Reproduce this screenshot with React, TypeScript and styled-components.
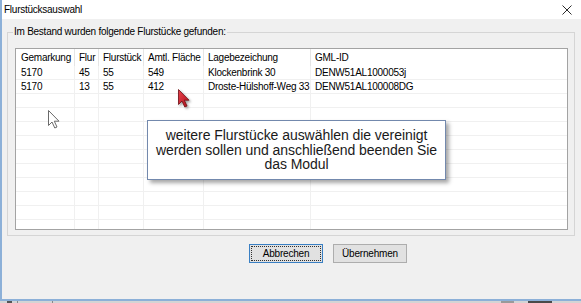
import React from 'react';
import styled, { createGlobalStyle } from 'styled-components';

const GlobalStyle = createGlobalStyle`
    html, body {
        margin: 0;
        padding: 0;
        background: #ffffff;
    }
    body {
        font-family: 'Liberation Sans', Arial, sans-serif;
        font-size: 10px;
        letter-spacing: -0.25px;
        color: #000000;
    }
`;

interface Parcel {
    gemarkung: string;
    flur: string;
    flurstueck: string;
    flaeche: string;
    lage: string;
    gmlId: string;
}

const parcels: Parcel[] = [
    { gemarkung: '5170', flur: '45', flurstueck: '55', flaeche: '549', lage: 'Klockenbrink 30', gmlId: 'DENW51AL1000053j' },
    { gemarkung: '5170', flur: '13', flurstueck: '55', flaeche: '412', lage: 'Droste-Hülshoff-Weg 33', gmlId: 'DENW51AL100008DG' },
];

const headers = ['Gemarkung', 'Flur', 'Flurstück', 'Amtl. Fläche', 'Lagebezeichung', 'GML-ID'];

const hintLines = ['weitere Flurstücke auswählen die vereinigt', 'werden sollen und anschließend beenden Sie', 'das Modul'];

const EMPTY_ROWS = 10;

const Screen = styled.div`
    position: relative;
    width: 581px;
    height: 303px;
    overflow: hidden;
    display: flex;
    flex-direction: column;
`;

const Window = styled.div`
    display: flex;
    flex-direction: column;
    width: 581px;
    box-sizing: border-box;
    border-left: 2px solid #8cb0d8;
    border-bottom: 2px solid #8cb0d8;
`;

const TitleBar = styled.div`
    height: 19px;
    display: flex;
    align-items: center;
    padding: 0 9px 0 2px;
    background: #ffffff;
`;

const Title = styled.span`
    font-size: 10px;
    line-height: 12px;
    color: #000000;
`;

const CloseIcon = styled.svg`
    margin-left: auto;
    display: block;
`;

const Body = styled.div`
    height: 280px;
    box-sizing: border-box;
    background: #f0f0f0;
    padding: 7px 0 0 5px;
    display: flex;
    flex-direction: column;
`;

const GroupBox = styled.fieldset`
    width: 568px;
    box-sizing: border-box;
    margin: 0;
    padding: 0 6px 5px 7px;
    border: 1px solid #d5d5d5;
    min-inline-size: 0;
`;

const Legend = styled.legend`
    margin-left: -2px;
    padding: 0 1px;
    font-size: 10px;
    line-height: 12px;
    color: #000000;
`;

const ListView = styled.div`
    margin-top: 10px;
    height: 182px;
    box-sizing: border-box;
    border: 1px solid #a3a3a3;
    background: #ffffff;
    overflow: hidden;
`;

const Row = styled.div<{ $header?: boolean }>`
    display: grid;
    grid-template-columns: 59px 24px 45px 60px 107px 1fr;
    height: ${({ $header }) => ($header ? '17px' : '14px')};
    box-sizing: border-box;
    border-bottom: ${({ $header }) => ($header ? 'none' : '1px solid #f0f0f0')};
`;

const Cell = styled.div<{ $header?: boolean }>`
    padding: 0 3px 0 4px;
    border-right: 1px solid ${({ $header }) => ($header ? '#e5e5e5' : '#f0f0f0')};
    font-size: 10px;
    line-height: ${({ $header }) => ($header ? '17px' : '13px')};
    white-space: nowrap;
    overflow: hidden;
    color: #000000;

    &:first-child {
        padding-left: 5px;
    }
    &:last-child {
        border-right: none;
    }
`;

const ButtonRow = styled.div`
    display: flex;
    gap: 10px;
    margin-top: 8px;
    padding-left: 242px;
`;

const Button = styled.button<{ $focused?: boolean }>`
    width: 74px;
    height: 19px;
    box-sizing: border-box;
    margin: 0;
    padding: 0;
    font-family: 'Liberation Sans', Arial, sans-serif;
    font-size: 10px;
    letter-spacing: -0.2px;
    color: #000000;
    background: #e1e1e1;
    border: 1px solid ${({ $focused }) => ($focused ? '#3a80c4' : '#adadad')};
    outline: ${({ $focused }) => ($focused ? '1px dotted #303030' : 'none')};
    outline-offset: -3px;
`;

const Taskbar = styled.div`
    height: 2px;
    display: flex;
    background: #d4d4d4;
`;

const TaskItem = styled.div<{ $left: number; $width: number; $color: string }>`
    margin-left: ${({ $left }) => $left}px;
    width: ${({ $width }) => $width}px;
    background: ${({ $color }) => $color};
`;

const Hint = styled.div`
    position: absolute;
    left: 147px;
    top: 120px;
    width: 299px;
    height: 60px;
    box-sizing: border-box;
    display: flex;
    flex-direction: column;
    align-items: center;
    justify-content: center;
    background: #ffffff;
    border: 1px solid #7389ad;
    box-shadow: 3px 3px 4px rgba(0, 0, 0, 0.35);
`;

const HintLine = styled.span`
    font-family: 'Liberation Sans', Arial, sans-serif;
    font-size: 14px;
    line-height: 14.5px;
    letter-spacing: -0.05px;
    white-space: nowrap;
    color: #1a1a1a;
`;

const Cursor = styled.svg<{ $x: number; $y: number }>`
    position: absolute;
    left: ${({ $x }) => $x}px;
    top: ${({ $y }) => $y}px;
    overflow: visible;
`;

const ARROW = 'M0.5 0.5 L0.5 15.5 L4 12 L6.8 18 L9 17 L6.3 11.2 L11 11.2 Z';

export default function App() {
    const blanks = new Array(EMPTY_ROWS).fill(0);

    return (
        <Screen>
            <GlobalStyle />
            <Window>
                <TitleBar>
                    <Title>Flurstücksauswahl</Title>
                    <CloseIcon width="10" height="10" viewBox="0 0 10 10">
                        <path d="M0.5 0.5 L9.5 9.5 M9.5 0.5 L0.5 9.5" stroke="#2b2b2b" strokeWidth="1" />
                    </CloseIcon>
                </TitleBar>
                <Body>
                    <GroupBox>
                        <Legend>Im Bestand wurden folgende Flurstücke gefunden:</Legend>
                        <ListView>
                            <Row $header>
                                {headers.map((h) => (
                                    <Cell $header key={h}>
                                        {h}
                                    </Cell>
                                ))}
                            </Row>
                            {parcels.map((p) => (
                                <Row key={p.gmlId}>
                                    <Cell>{p.gemarkung}</Cell>
                                    <Cell>{p.flur}</Cell>
                                    <Cell>{p.flurstueck}</Cell>
                                    <Cell>{p.flaeche}</Cell>
                                    <Cell>{p.lage}</Cell>
                                    <Cell>{p.gmlId}</Cell>
                                </Row>
                            ))}
                            {blanks.map((_, i) => (
                                <Row key={`blank-${i}`}>
                                    {headers.map((h) => (
                                        <Cell key={h} />
                                    ))}
                                </Row>
                            ))}
                        </ListView>
                    </GroupBox>
                    <ButtonRow>
                        <Button $focused>Abbrechen</Button>
                        <Button>Übernehmen</Button>
                    </ButtonRow>
                </Body>
            </Window>
            <Taskbar>
                <TaskItem $left={7} $width={5} $color="#555555" />
                <TaskItem $left={5} $width={1} $color="#888888" />
                <TaskItem $left={34} $width={1} $color="#888888" />
                <TaskItem $left={448} $width={13} $color="#9a9a9a" />
                <TaskItem $left={14} $width={24} $color="#4a4a4a" />
            </Taskbar>

            <Hint>
                {hintLines.map((line) => (
                    <HintLine key={line}>{line}</HintLine>
                ))}
            </Hint>

            <Cursor $x={48} $y={110} width="12" height="19" viewBox="0 0 12 19">
                <path d={ARROW} fill="#ffffff" stroke="#6a6a6a" strokeWidth="1" strokeLinejoin="round" />
            </Cursor>
            <Cursor $x={178} $y={89} width="12" height="19" viewBox="0 0 12 19">
                <defs>
                    <linearGradient id="red" x1="0" y1="0" x2="1" y2="1">
                        <stop offset="0%" stopColor="#e8424c" />
                        <stop offset="100%" stopColor="#b0101c" />
                    </linearGradient>
                    <filter id="sh" x="-50%" y="-50%" width="200%" height="200%">
                        <feDropShadow dx="1.5" dy="1.5" stdDeviation="1" floodColor="#000000" floodOpacity="0.4" />
                    </filter>
                </defs>
                <path d={ARROW} fill="url(#red)" stroke="#6b0a10" strokeWidth="0.8" strokeLinejoin="round" filter="url(#sh)" />
            </Cursor>
        </Screen>
    );
}
